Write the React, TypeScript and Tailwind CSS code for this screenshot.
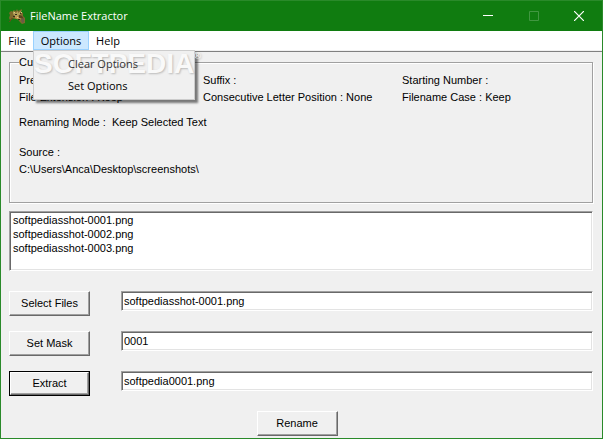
import React, { useState } from 'react';

const raised =
  'border border-t-white border-l-white border-r-[#696969] border-b-[#696969] shadow-[inset_-1px_-1px_0_#a0a0a0]';
const sunken =
  'border border-t-[#a0a0a0] border-l-[#a0a0a0] border-r-white border-b-white bg-white shadow-[inset_1px_1px_0_#696969,inset_-1px_-1px_0_#e3e3e3]';

const files = ['softpediasshot-0001.png', 'softpediasshot-0002.png', 'softpediasshot-0003.png'];

const AppIcon = () => (
  <svg className="h-4 w-4" viewBox="0 0 16 16" aria-hidden="true">
    <path d="M2 3l3 1-1-2 3 1 1-2 1 2 4-2-1 3 2 1 0 3 2 2v5l-3 1-3-3-1-2-3 0-3-1-2 2-1-2 1-3-1-2z" fill="#7d6a2c" />
    <path d="M4 3l3 2 2-2v2l4-3-2 3 1 1-3 2-3 0-2-2z" fill="#b3a05a" />
    <path d="M6 8h3l3 3-2 1-4-2z" fill="#c09a50" />
    <path d="M10 7l3 1 2 3-3-1-2 0z" fill="#574420" />
    <path d="M12 11l3-1v4l-2 1z" fill="#6b5a48" />
    <path d="M0 14l2-3 1-1 1 1-2 1-1 2z" fill="#8a3a20" />
    <path d="M6 6h2v1H6zM4 8h2v1H4zM9 11h2v1H9zM11 5h1v1h-1z" fill="#36301b" />
    <path d="M12 4h1v1h-1zM8 9h1v1H8zM5 4h1v1H5z" fill="#dfc988" />
  </svg>
);

const TitleBar = () => (
  <header className="flex h-[30px] items-center bg-[#107c10] pl-2 text-white">
    <AppIcon />
    <h1 className="ml-[5px] flex-1 font-['Open_Sans','Noto_Sans',sans-serif] text-[11px] leading-4">
      FileName Extractor
    </h1>
    <button type="button" aria-label="Minimize" className="flex h-full w-[46px] items-center justify-center">
      <svg className="h-[10px] w-[10px]" viewBox="0 0 10 10" stroke="currentColor" shapeRendering="crispEdges">
        <path d="M0 4.5h10" />
      </svg>
    </button>
    <button type="button" aria-label="Maximize" disabled className="flex h-full w-[45px] items-center justify-center text-[#419741]">
      <svg className="h-[10px] w-[10px]" viewBox="0 0 10 10" fill="none" stroke="currentColor">
        <path d="M.5.5h9v9h-9z" />
      </svg>
    </button>
    <button type="button" aria-label="Close" className="flex h-full w-[46px] items-center justify-center">
      <svg className="h-[10px] w-[10px]" viewBox="0 0 10 10" stroke="currentColor" strokeWidth="1.2">
        <path d="M0 0l10 10M10 0L0 10" />
      </svg>
    </button>
  </header>
);

const MenuBar = () => {
  const [open, setOpen] = useState(true);

  return (
    <nav className="flex h-[19px] bg-white font-['Open_Sans','Noto_Sans',sans-serif] text-[11px] leading-[17px]">
      <button type="button" className="w-8 text-center">File</button>
      <div className="relative">
        <button
          type="button"
          aria-expanded={open}
          onClick={() => setOpen(!open)}
          className="h-[19px] w-14 border border-[#99d1ff] bg-[#cce8ff]"
        >
          Options
        </button>
        {open && (
          <div className="absolute left-0 top-[19px] z-10 w-[162px] border border-[#cccccc] bg-[#f0f0f0] pb-[3px] pt-px shadow-[3px_3px_2px_rgba(0,0,0,0.5)]">
            <div
              aria-hidden="true"
              className="pointer-events-none absolute left-0 top-0 flex font-['Liberation_Sans',sans-serif] text-[28px] font-bold leading-[26px] text-[#f9f9f9] [text-shadow:1px_1px_2px_rgba(0,0,0,0.22)]"
            >
              SOFTPEDIA<span className="text-[9px] leading-[10px]">®</span>
            </div>
            <button type="button" className="relative block h-[22px] w-full pl-[34px] text-left text-[#333333]">
              Clear Options
            </button>
            <button type="button" className="relative block h-[22px] w-full pl-[34px] text-left">Set Options</button>
          </div>
        )}
      </div>
      <button type="button" className="w-[38px] text-center">Help</button>
    </nav>
  );
};

const CurrentOptions = () => (
  <fieldset className="h-[147px] border border-[#a0a0a0] pl-[9px] shadow-[inset_1px_1px_0_#fff,1px_1px_0_#fff]">
    <legend className="h-[13px] leading-[13px]">Current Options</legend>
    <div className="grid grid-cols-[184px_199px_1fr] pt-[3px] leading-[17px]">
      <span>Prefix :</span>
      <span>Suffix :</span>
      <span>Starting Number :</span>
      <span>File Extension : Keep</span>
      <span>Consecutive Letter Position : None</span>
      <span>Filename Case : Keep</span>
    </div>
    <p className="mt-2 leading-[17px]">Renaming Mode : &nbsp;Keep Selected Text</p>
    <p className="mt-[13px] leading-[17px]">Source :</p>
    <p className="leading-4">C:\Users\Anca\Desktop\screenshots\</p>
  </fieldset>
);

type RowProps = {
  label: string;
  value: string;
  isDefault?: boolean;
};

const Row: React.FC<RowProps> = ({ label, value, isDefault }) => (
  <div className="flex items-start">
    <div className={isDefault ? 'h-[25px] w-[81px] border border-black' : 'h-[25px] w-[81px]'}>
      <button type="button" className={`h-full w-full bg-[#f0f0f0] ${raised}`}>
        {label}
      </button>
    </div>
    <input
      type="text"
      aria-label={label}
      defaultValue={value}
      className={`ml-[31px] h-5 min-w-0 flex-1 rounded-none px-[2px] outline-none ${sunken}`}
    />
  </div>
);

export default function App() {
  return (
    <div className="flex min-h-screen flex-col border border-[#2a8a2a] bg-[#f0f0f0] font-['Liberation_Sans',sans-serif] text-[11px] text-black">
      <TitleBar />
      <MenuBar />
      <main className="mt-px flex flex-1 flex-col border-t border-[#808080] pb-[2px] pl-2 pr-[9px] pt-1">
        <CurrentOptions />
        <select
          size={4}
          aria-label="Selected files"
          className={`mt-2 h-[60px] w-full overflow-hidden rounded-none py-[2px] outline-none ${sunken}`}
        >
          {files.map((file) => (
            <option key={file} className="h-[14px] min-h-0 px-[3px] py-0 leading-[14px]">
              {file}
            </option>
          ))}
        </select>
        <div className="mt-5 flex flex-col gap-[15px]">
          <Row label="Select Files" value="softpediasshot-0001.png" />
          <Row label="Set Mask" value="0001" />
          <Row label="Extract" value="softpedia0001.png" isDefault />
        </div>
        <div className="mt-[15px] flex justify-center pr-2">
          <button type="button" className={`h-[25px] w-[81px] bg-[#f0f0f0] ${raised}`}>
            Rename
          </button>
        </div>
      </main>
    </div>
  );
}
